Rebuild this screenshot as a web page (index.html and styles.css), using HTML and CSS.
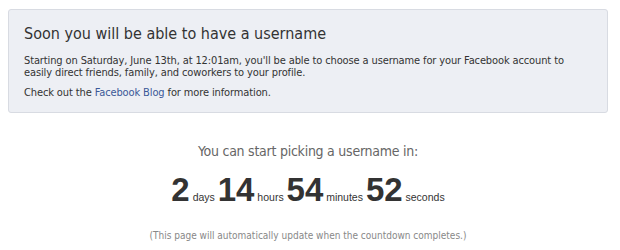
FILE: index.html
```html
<!DOCTYPE html>
<html>
<head>
<meta charset="utf-8">
<link rel="stylesheet" href="styles.css">
</head>
<body>
<div class="notice">
  <h2 class="notice-title">Soon you will be able to have a username</h2>
  <p class="notice-text">Starting on Saturday, June 13th, at 12:01am, you'll be able to choose a username for your Facebook account to easily direct friends, family, and coworkers to your profile.</p>
  <p class="notice-text">Check out the <a class="link" href="#">Facebook Blog</a> for more information.</p>
</div>
<div class="countdown">
  <div class="countdown-head">You can start picking a username in:</div>
  <div class="countdown-row"><span class="num">2</span> days <span class="num">14</span> hours <span class="num">54</span> minutes <span class="num">52</span> seconds</div>
  <div class="countdown-note">(This page will automatically update when the countdown completes.)</div>
</div>
</body>
</html>
```
FILE: styles.css
```css
html, body {
  margin: 0;
  padding: 0;
  background: #ffffff;
}
body {
  font-family: "DejaVu Sans Condensed", "DejaVu Sans", sans-serif;
  font-stretch: condensed;
  color: #333333;
  width: 620px;
}
.notice {
  box-sizing: border-box;
  width: 600px;
  height: 104px;
  margin: 9px 0 0 8px;
  padding: 14px 15px 0 15px;
  background: #edeff4;
  border: 1px solid #d8dbe2;
  border-radius: 3px;
}
.notice-title {
  margin: 0 0 11px 0;
  font-size: 16px;
  line-height: 20px;
  font-weight: normal;
  color: #333333;
}
.notice-text {
  margin: 0 0 8px 0;
  font-size: 11px;
  letter-spacing: -0.12px;
  line-height: 12px;
  color: #333333;
}
.link {
  color: #3b5998;
  text-decoration: none;
}
.countdown {
  width: 600px;
  margin-left: 8px;
  text-align: center;
  padding-top: 28px;
}
.countdown-head {
  font-size: 14px;
  letter-spacing: -0.25px;
  line-height: 20px;
  color: #666666;
}
.countdown-row {
  margin-top: 11px;
  font-family: "Liberation Sans", Arial, sans-serif;
  font-stretch: normal;
  font-size: 10.5px;
  color: #333333;
  line-height: 36px;
}
.num {
  font-size: 33px;
  font-weight: bold;
}
.countdown-note {
  margin-top: 14px;
  font-size: 10px;
  line-height: 14px;
  color: #888888;
}
```
